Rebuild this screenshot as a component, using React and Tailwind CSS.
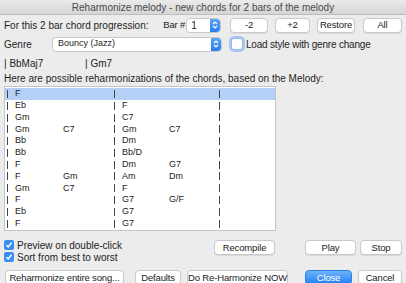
import React from "react";

const font = { fontFamily: '"Liberation Sans", Arial, sans-serif' };

function Btn({ children, className = "", primary = false }) {
  return (
    <div
      className={
        "flex items-center justify-center whitespace-nowrap rounded-[4px] h-[15px] text-[9.5px] tracking-[-0.15px] leading-none shrink-0 " +
        (primary
          ? "bg-gradient-to-b from-[#6db3fb] to-[#1c7ff7] text-white border border-[#2a7fe8] "
          : "bg-white text-[#222] border border-[#c9c9c9] shadow-[0_1px_0_rgba(0,0,0,0.08)] ") +
        className
      }
    >
      {children}
    </div>
  );
}

function Stepper() {
  return (
    <div className="w-[10px] h-full rounded-r-[3px] bg-gradient-to-b from-[#5aa3f8] to-[#2a7ef2] flex items-center justify-center">
      <svg width="6" height="10" viewBox="0 0 6 10">
        <path d="M1 4 L3 2 L5 4" fill="none" stroke="white" strokeWidth="1.1" />
        <path d="M1 6 L3 8 L5 6" fill="none" stroke="white" strokeWidth="1.1" />
      </svg>
    </div>
  );
}

function Check({ checked }) {
  if (checked) {
    return (
      <div className="w-[10px] h-[10px] rounded-[2px] bg-[#3b8ef5] flex items-center justify-center">
        <svg width="8" height="8" viewBox="0 0 8 8">
          <path d="M1.5 4.2 L3.2 6 L6.5 1.8" fill="none" stroke="white" strokeWidth="1.4" />
        </svg>
      </div>
    );
  }
  return (
    <div className="w-[12px] h-[12px] rounded-[3px] bg-white border border-[#9fb9e6] shadow-[0_0_0_2px_#a9c6f2]" />
  );
}

const rows = [
  ["F", "", "", ""],
  ["Eb", "", "F", ""],
  ["Gm", "", "C7", ""],
  ["Gm", "C7", "Gm", "C7"],
  ["Bb", "", "Dm", ""],
  ["Bb", "", "Bb/D", ""],
  ["F", "", "Dm", "G7"],
  ["F", "Gm", "Am", "Dm"],
  ["Gm", "C7", "F", ""],
  ["F", "", "G7", "G/F"],
  ["Eb", "", "G7", ""],
  ["F", "", "G7", ""],
];

function Bar() {
  return <span className="inline-block w-[1px] h-[8px] bg-[#444] mr-[7px]" />;
}

export default function App() {
  return (
    <div style={font} className="w-[406px] h-[283px] bg-[#ececec] overflow-hidden text-[#1e1e1e] flex flex-col">
      <div className="h-[15px] shrink-0 bg-gradient-to-b from-[#ebebeb] to-[#d5d5d5] border-b border-[#bdbdbd] flex items-center justify-center text-[10px] text-[#4a4a4a] whitespace-nowrap">
        Reharmonize melody - new chords for 2 bars of the melody
      </div>

      <div className="flex flex-col px-[4px]">
        <div className="flex items-center h-[16px] mt-[2px] text-[10px] whitespace-nowrap">
          <div className="w-[160px]">For this 2 bar chord progression:</div>
          <div className="w-[23px] text-[9.5px] tracking-[-0.2px]">Bar #</div>
          <div className="flex w-[35px] h-[15px] bg-white border border-[#c9c9c9] rounded-[4px] overflow-hidden">
            <div className="flex-1 flex items-center pl-[4px] text-[10px]">1</div>
            <Stepper />
          </div>
          <Btn className="ml-[9px] w-[38px]">-2</Btn>
          <Btn className="ml-[7px] w-[35px]">+2</Btn>
          <Btn className="ml-[7px] w-[38px]">Restore</Btn>
          <Btn className="ml-[8px] w-[39px]">All</Btn>
        </div>

        <div className="flex items-center h-[16px] mt-[3px] text-[10px] whitespace-nowrap">
          <div className="w-[48px]">Genre</div>
          <div className="flex w-[170px] h-[15px] bg-white border border-[#c9c9c9] rounded-[4px] overflow-hidden">
            <div className="flex-1 flex items-center pl-[5px] text-[9px]">Bouncy (Jazz)</div>
            <Stepper />
          </div>
          <div className="ml-[9px]">
            <Check />
          </div>
          <div className="ml-[3px] tracking-[-0.2px]">Load style with genre change</div>
        </div>

        <div className="flex items-center h-[12px] mt-[5px] text-[10px]">
          <div className="w-[81px]">| BbMaj7</div>
          <div>| Gm7</div>
        </div>

        <div className="h-[12px] mt-[3px] text-[10px] flex items-center whitespace-nowrap">
          Here are possible reharmonizations of the chords, based on the Melody:
        </div>

        <div className="mt-[2px] w-[272px] h-[145px] bg-white border border-[#c4c4c4] flex flex-col pt-[1px] text-[9px] text-[#222]">
          {rows.map((r, i) => (
            <div
              key={i}
              className={"flex items-center h-[11.8px] shrink-0 pl-[2px] " + (i === 0 ? "bg-[#b5d0f7]" : "")}
            >
              <div className="w-[56px] flex items-center"><Bar />{r[0]}</div>
              <div className="w-[51px]">{r[1]}</div>
              <div className="w-[55px] flex items-center"><Bar />{r[2]}</div>
              <div className="w-[50px]">{r[3]}</div>
              <div className="flex items-center"><Bar /></div>
            </div>
          ))}
        </div>

        <div className="flex mt-[6px]">
          <div className="flex flex-col text-[10px] w-[210px] whitespace-nowrap">
            <div className="flex items-center h-[12px] mt-[2px]">
              <Check checked />
              <span className="ml-[3px]">Preview on double-click</span>
            </div>
            <div className="flex items-center h-[12px]">
              <Check checked />
              <span className="ml-[3px]">Sort from best to worst</span>
            </div>
          </div>
          <Btn className="w-[61px] mt-[3px]">Recompile</Btn>
          <Btn className="ml-[30px] w-[51px] mt-[3px]">Play</Btn>
          <Btn className="ml-[4px] w-[42px] mt-[3px]">Stop</Btn>
        </div>

        <div className="flex mt-[7px]">
          <Btn className="w-[119px] ml-[1px]">Reharmonize entire song...</Btn>
          <Btn className="ml-[11px] w-[46px]">Defaults</Btn>
          <Btn className="ml-[6px] w-[101px]">Do Re-Harmonize NOW</Btn>
          <Btn primary className="ml-[17px] w-[47px]">Close</Btn>
          <Btn className="ml-[6px] w-[44px]">Cancel</Btn>
        </div>
      </div>
    </div>
  );
}
